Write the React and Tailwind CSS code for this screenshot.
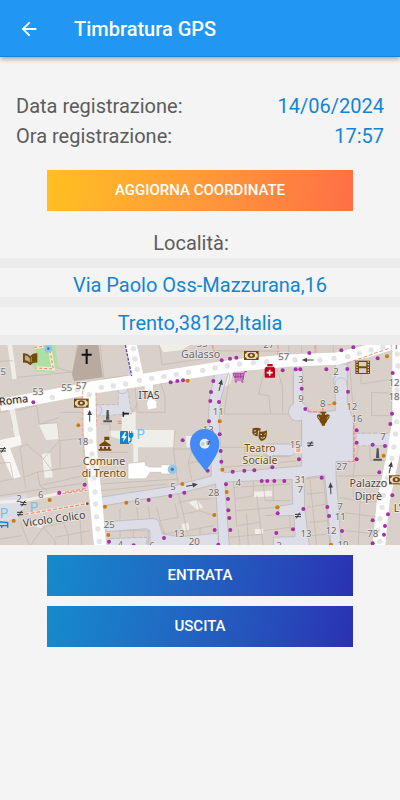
import React from 'react';

// [x, y] of the house number entrances on the map
const purpleDots = [
    [100, 175], [178, 446], [254, 422], [446, 468], [511, 456], [553, 446], [512, 115], [532, 111], [549, 109],
    [665, 49], [690, 44], [709, 41], [640, 111], [633, 144], [631, 171], [657, 174], [627, 232], [659, 271],
    [548, 289], [662, 321], [664, 353], [623, 380], [698, 383], [733, 380], [763, 379], [817, 370], [678, 421],
    [684, 465], [685, 499], [688, 522], [691, 558], [644, 558], [492, 582], [655, 602], [401, 604], [327, 593],
    [785, 411], [802, 411], [823, 411], [853, 411], [848, 79], [887, 76], [901, 76], [905, 134], [916, 195],
    [979, 76], [1042, 75], [1044, 143], [928, 27], [1024, 19], [1060, 10], [1133, 43], [1178, 87], [1176, 209],
    [1171, 240], [1070, 259], [1070, 296], [1118, 302], [1155, 306], [1070, 346], [1138, 385], [897, 346],
    [965, 401], [982, 489], [987, 516], [1026, 561], [910, 495], [833, 508], [879, 556], [829, 567],
    [1177, 454], [1164, 511], [1118, 529], [1155, 546], [1152, 572], [1118, 598],
];

const orangeDots = [
    [235, 244], [563, 110], [659, 232], [667, 377], [547, 420], [379, 476], [315, 488], [149, 468], [41, 530],
    [325, 573], [680, 444], [643, 513], [832, 490], [993, 602], [1003, 178], [1161, 37], [1151, 335],
];

const roadDots = [
    [5, 179], [56, 172], [157, 160], [232, 137], [304, 130], [340, 125], [377, 120], [418, 109], [455, 103],
    [492, 97], [529, 91], [566, 85], [608, 79], [645, 72], [682, 65], [719, 60], [760, 56], [800, 53], [885, 48],
    [960, 48], [1002, 43], [1043, 38], [1078, 28], [1113, 18], [1148, 9], [400, 14], [405, 45], [411, 76], [268, 152],
    [271, 256], [272, 292], [276, 330], [278, 366], [282, 402], [285, 444], [287, 480], [290, 518], [294, 555],
    [298, 592], [1192, 30], [1194, 66], [1191, 137], [1190, 233], [1187, 270], [1182, 309], [1176, 343],
    [1163, 402], [1150, 454], [1146, 490], [1140, 524], [1134, 560], [1139, 592],
];

const houseNumbers = [
    [10, 94, '5'], [114, 154, '53'], [200, 142, '55'], [244, 135, '57'], [248, 302, '18'], [57, 473, '2'],
    [122, 461, '6'], [606, 10, '55'], [806, 13, '27'], [851, 47, '57'], [903, 116, '3'], [903, 173, '9'],
    [1008, 94, '2'], [1008, 148, '8'], [968, 189, '8'], [1055, 199, '12'], [1071, 235, '16'], [1182, 125, '12'],
    [1182, 168, '18'], [1149, 289, '7'], [655, 213, '11'], [625, 266, '13'], [886, 311, '15'], [1025, 377, '27'],
    [519, 439, '5'], [411, 484, '6'], [641, 457, '28'], [715, 425, '4'], [901, 416, '31'], [901, 448, '7'],
    [328, 551, '25'], [537, 580, '13'], [583, 603, '20'], [456, 614, '6'], [361, 612, '4'], [918, 578, '13'],
    [993, 570, '12'], [1020, 497, '7'], [1021, 528, '11'], [1029, 613, '19'], [1118, 580, '78'], [837, 614, '3'],
    [1188, 14, '1'],
];

const placeNames = [
    [602, 41, 'Galasso', '#666666'],
    [447, 165, 'ITAS', '#444444'],
    [1105, 428, 'Palazzo', '#444444'],
    [1105, 468, 'Diprè', '#444444'],
    [312, 364, 'Comune', '#734a08'],
    [312, 400, 'di Trento', '#734a08'],
    [780, 323, 'Teatro', '#734a08'],
    [780, 359, 'Sociale', '#734a08'],
    [1192, 504, "L'", '#734a08'],
];

// outlines of the single buildings
const buildingLines = [
    'M0 52L38 50M50 100L230 83M300 0L312 108M170 70L225 88M217 96L232 0M312 104L382 95',
    'M395 98L540 76M478 0L486 62M486 62L640 40V3M640 20L840 22M866 0V38M905 0V26M948 0V24M1000 0V28M1090 28L1080 0',
    'M0 205L28 201L38 250M50 200L110 184M110 184L118 240M118 240L172 236M172 236L178 290M178 290L250 282M178 290L130 345L155 378L180 374V292',
    'M60 310L80 300L130 345M60 310L72 400L112 384L155 378M72 400L78 434M0 358L30 355L40 405L0 412M112 384L120 425L250 395M155 378L245 365',
    'M0 455L245 418M120 425L142 440M180 205H246M118 240L178 220',
    'M60 535L90 606M0 585L65 575M90 606L130 550L190 535L250 520M130 550L165 590V606M190 535L205 575M165 580L270 560M205 575V606M240 525L245 606',
    'M405 127L412 205H495V155L482 118M412 180L392 210M482 118L540 112M540 90L625 78',
    'M520 315H630M575 320L565 355L575 406M565 358L640 340M520 315L535 425M525 260L520 315',
    'M300 240H330V276M300 325H385M300 420L535 405M300 440L500 420',
    'M672 210H900M690 90L672 210M795 75L775 150L806 155L812 208M830 72L848 130V205M880 95V180',
    'M665 310H905M670 370L900 350M735 300V335H800M800 300V338H870M905 230V350',
    'M1050 70L1058 180M1083 85V120L1180 105V60M1115 145L1175 148V215H1115ZM1060 268H1175M1075 305L1068 350M1110 310V350H1165M1010 352H1065L1060 395H1150',
    'M1010 396H1060V425L1150 415M1020 460L1090 475L1140 470M1025 505L1140 520M1060 425V460M1080 475L1075 606M1035 560L1130 570',
    'M920 405L970 398L990 606M930 408L950 606M920 450L975 445M922 490L980 480M930 535L985 530M935 575L990 570',
    'M470 490L480 530L535 520L525 480M535 450L550 510L600 500L590 465L535 475M600 500L640 515M550 510L560 560L640 545M480 530L495 570L560 560M590 465L635 465M410 490L415 525M360 495V525M445 485L450 525M560 560L568 575M600 550V570',
    'M700 415L705 465L760 455V410M705 465L710 545L780 535L770 455M710 500L830 490M780 535L790 606M715 555L720 606M790 420L795 470H870M820 420V470M740 510L745 606M790 560L870 550M700 430L870 420M690 580L790 570M795 515L870 510V560',
    'M340 560H445V606M360 560V585M400 560V585M490 560V590M330 585L440 580',
];

const Bill = ({ x, y }) => (
    <g transform={`translate(${x} ${y})`}>
        <rect x="-22" y="-13" width="44" height="27" fill="#734a08" />
        <path d="M-13 -10H13Q14 -5 19 -4V5Q14 6 13 11H-13Q-14 6 -19 5V-4Q-14 -5 -13 -10Z" fill="#ead9c6" />
        <ellipse rx="11" ry="8" fill="#734a08" />
        <circle r="4" fill="#ead9c6" />
    </g>
);

const Arrow = ({ x, y, turn }) => (
    <g transform={`translate(${x} ${y}) rotate(${turn})`} fill="#444444">
        <rect x="-17" y="-1.5" width="24" height="3" />
        <path d="M19 0L3 -7V7Z" />
    </g>
);

const Monument = ({ x, y }) => (
    <path transform={`translate(${x} ${y})`} d="M-3 -20H3L5 9H-5ZM-13 11H13V17H-13Z" fill="#555555" />
);

const Gate = ({ x, y }) => (
    <path transform={`translate(${x} ${y})`} d="M-9 -3H9M-9 4H9M5 -8L-5 9" stroke="#333333" strokeWidth="3" fill="none" />
);

const CityMap = () => (
    <svg
        viewBox="0 3 1200 600"
        preserveAspectRatio="xMidYMid slice"
        className="block w-full h-[200px] font-['Noto_Sans','Open_Sans',sans-serif]"
        role="img"
        aria-label="Mappa"
    >
        <rect width="1200" height="610" fill="#d9d0c9" />

        {/* Courtyards and open ground */}
        <g fill="#f0eee8">
            <path d="M22 0H36L50 104L37 106Z" />
            <path d="M22 188L42 185L62 290L48 290Z" />
            <path d="M0 288L60 275L65 302L30 312L62 398L38 405L0 320Z" fill="#f8f6f2" />
            <path d="M117 242L172 236L178 285L138 288Z" />
            <path d="M126 330L150 326L158 400L134 403Z" />
            <path d="M365 205H407V258H522V310H414V355H400V300L328 275V260H365Z" />
            <path d="M557 276H576V310H560Z" />
            <path d="M478 3H570L545 18L490 25Z" />
            <path d="M760 443L815 440L817 457L762 460Z" />
            <path d="M566 475L590 467L610 490L592 497Z" />
            <path d="M545 540L566 537L568 560L548 562Z" />
            <path d="M100 530L140 520L125 552L105 548Z" />
            <path d="M682 84L700 82L690 120L672 130Z" />
            <path d="M765 555H790V570H765Z" />
        </g>
        <path d="M434 123L458 118L460 165L469 173V192L444 196L441 178L446 165V140H434Z" fill="#ffffff" />
        <path d="M384 358L436 353V364L450 369H483V362H515V390H483V385H450L438 404L384 405Z" fill="#ffffff" stroke="#c9bfb5" strokeWidth="2" />

        {buildingLines.map((d) => (
            <path key={d} d={d} fill="none" stroke="#c2b5aa" strokeWidth="2" />
        ))}

        {/* Church and garden */}
        <path d="M235 0H295L308 100L222 112L216 90Z" fill="#b9aaa0" />
        <path d="M98 0H165L174 70L160 87L105 80L98 62L110 30Z" fill="#aedfa3" />
        <path d="M103 10L130 7M150 20L160 75L108 72" fill="none" stroke="#f5e9cf" strokeWidth="10" />
        <path d="M103 10L130 7M150 20L160 75L108 72" fill="none" stroke="#e57c60" strokeWidth="3" strokeDasharray="8 7" />
        <circle cx="145" cy="14" r="12" fill="#8fc7e8" />
        <circle cx="145" cy="14" r="4" fill="#3478b8" />

        {/* Pedestrian streets and squares */}
        <g fill="#dddde8" stroke="#b4b2b8" strokeWidth="2">
            <path d="M355 130H382L395 210L355 212L300 216V182H355Z" strokeDasharray="12 5" />
            <path d="M352 132A16 18 0 0 0 384 130" />
            <path d="M288 181A17 18 0 0 1 288 217Z" />
            <path d="M0 462L80 452L75 485L52 525L0 532Z" stroke="none" />
            <path d="M1068 268H1178L1172 305H1068Z" strokeDasharray="12 5" />
            <path d="M310 533L460 524Q476 525 478 538L487 570L540 578L655 568V606H450V560L440 554L320 563Z" />
            <path d="M330 584L440 580V606H325Z" strokeDasharray="12 5" />
            <path d="M645 88L686 84L662 165L657 230L665 365L672 386L905 366V228A24 24 0 0 1 880 180V80H908V178A24 24 0 0 1 925 205L1006 200V125A17 17 0 0 1 1006 100V60H1042V180L1060 225V353L1008 352V397L1024 606H993L974 393L925 400L912 405L914 490L928 606H820V580L885 578L882 514L835 516L838 486L878 480L876 406L675 414L678 470L688 606H657L647 420L540 448L300 487V460L520 426L634 396L632 300L626 215L628 165Z" />
            <path d="M1006 125A18 18 0 1 1 1040 125" fill="none" />
            <path d="M800 300H870A17 17 0 0 1 870 335H800" />
        </g>
        <rect x="884" y="308" width="22" height="20" fill="#f2e6df" />

        {/* Carriage ways */}
        <g fill="none" stroke="#ffffff" strokeLinejoin="round">
            <path d="M0 183L180 150L280 130L440 106L700 65L860 50L1010 44L1100 22L1170 0" strokeWidth="37" />
            <path d="M392 0L415 105" strokeWidth="35" />
            <path d="M268 135L271 300L285 440L301 610" strokeWidth="37" />
            <path d="M1196 0L1196 230L1180 330L1150 470L1136 610" strokeWidth="38" />
            <path d="M0 475L70 470L170 450L262 438" strokeWidth="9" stroke="#f2efe9" />
        </g>
        <path d="M248 140L247 250L258 430" fill="none" stroke="#f3a99b" strokeWidth="3" strokeDasharray="11 5" />
        <path d="M288 145L290 245" fill="none" stroke="#f3a99b" strokeWidth="3" strokeDasharray="11 5" />
        <path d="M376 3L395 96" fill="none" stroke="#5547d8" strokeWidth="4" strokeDasharray="9 4" />
        <g fill="#e4e4e7">
            {roadDots.map(([x, y]) => (
                <circle key={`${x}-${y}`} cx={x} cy={y} r="8" />
            ))}
        </g>

        {/* Footpaths */}
        <g fill="none" stroke="#f4ece6" strokeWidth="8">
            <path d="M75 511L262 479" />
            <path d="M170 450L262 438" />
        </g>
        <g fill="none" stroke="#f08f80" strokeWidth="4" strokeDasharray="12 5">
            <path d="M75 511L262 479" />
            <path d="M170 451L262 439M195 445L262 433" />
            <path d="M922 201L968 206V182H1000" />
            <path d="M1062 210V352H1045" />
            <path d="M1042 57L1170 12" strokeWidth="3" />
            <path d="M834 3V35M945 3V28M636 3L650 45" strokeWidth="3" />
            <path d="M353 232H366M353 238H366M889 315H902M889 321H902" />
        </g>

        <g fill="#a531a8">
            {purpleDots.map(([x, y]) => (
                <circle key={`${x}-${y}`} cx={x} cy={y} r="6" />
            ))}
        </g>
        <g fill="#cc7b0c">
            {orangeDots.map(([x, y]) => (
                <circle key={`${x}-${y}`} cx={x} cy={y} r="6" />
            ))}
        </g>
        <circle cx="262" cy="479" r="4" fill="#555555" />

        <g fontSize="29" textAnchor="middle" fill="#6b6b6b" stroke="#ece7e3" strokeWidth="4" paintOrder="stroke">
            {houseNumbers.map(([x, y, label]) => (
                <text key={`${x}-${y}`} x={x} y={y}>{label}</text>
            ))}
        </g>
        <g fontSize="32" textAnchor="middle" stroke="#eee9e5" strokeWidth="5" paintOrder="stroke">
            {placeNames.map(([x, y, label, color]) => (
                <text key={label} x={x} y={y} fill={color}>{label}</text>
            ))}
            <text transform="translate(42 179) rotate(-7)" fill="#222222">Roma</text>
            <text transform="translate(164 536) rotate(-8)" fill="#333333">Vicolo Colico</text>
        </g>
        <g fontSize="44" textAnchor="middle" fill="#7cc0e8">
            <text x="422" y="285">P</text>
            <text x="102" y="503">P</text>
            <text x="12" y="521">P</text>
        </g>

        <Bill x={244} y={177} />
        <Bill x={754} y={34} />
        <Bill x={1189} y={407} />
        <Arrow x={269} y={216} turn={-90} />
        <Arrow x={661} y={124} turn={-76} />
        <Arrow x={924} y={48} turn={180} />
        <Arrow x={575} y={424} turn={-10} />
        <Arrow x={992} y={434} turn={-92} />
        <Arrow x={1171} y={371} turn={-78} />
        <Monument x={323} y={218} />
        <Monument x={1133} y={333} />
        <Gate x={9} y={317} />
        <Gate x={931} y={300} />
        <Gate x={70} y={478} />
        <Gate x={60} y={508} />
        <Gate x={894} y={514} />
        <path d="M370 203V218M370 209H387" stroke="#222222" strokeWidth="5" fill="none" />

        {/* Church cross */}
        <path d="M257 15H263V29H275V35H263V60H257V35H245V29H257Z" fill="#111111" />
        {/* Library */}
        <path d="M69 28Q82 26 91 37Q98 26 112 28V56Q98 54 91 64Q82 54 69 56Z" fill="#734a08" />
        <path d="M76 35Q85 36 89 44V54Q83 48 76 48ZM94 38V55" fill="#c6ad8f" stroke="#c6ad8f" strokeWidth="2" />
        {/* Town hall */}
        <path d="M313 278H328V288H316V292L332 302V306H298V302L313 292ZM300 308H306V314H312V308H318V314H324V308H330V315H334V320H296V315H300Z" fill="#734a08" />
        {/* Charging station */}
        <g fill="#0a86cf">
            <path d="M360 264Q360 261 363 261H381Q384 261 384 264V296H387V300H360Z" />
            <path d="M387 267V262H390V267H394V262H397V267H400V276Q399 281 395 282V290Q394 298 386 296V291Q391 293 391 288V282Q386 280 386 276V267Z" />
            <path d="M374 265L364 282H371L369 294L381 277H374L378 265Z" fill="#ffffff" />
        </g>
        {/* Bus shelter at the left edge */}
        <path d="M0 534L23 536V551M0 545H22M5 545V552" stroke="#0a86cf" strokeWidth="4" fill="none" />
        {/* Supermarket cart */}
        <g fill="none" stroke="#ac39ac" strokeWidth="3">
            <path d="M741 83H733L729 108H704" />
            <path d="M731 88H699L704 102H729M703 93H731M703 98H730M707 88V102M714 88V102M722 88V102" />
            <circle cx="708" cy="113" r="2" />
            <circle cx="727" cy="113" r="2" />
        </g>
        {/* Pharmacy */}
        <path d="M802 60H818V68H822L825 74V98Q825 101 822 101H797Q794 101 794 98V74L798 68H802Z" fill="#c4001d" />
        <path d="M809 77V95M800 86H818" stroke="#ffffff" strokeWidth="5" />
        <path d="M801 68H819" stroke="#ffffff" strokeWidth="2" />
        {/* Cinema */}
        <path d="M1066 50H1110V90H1066Z" fill="#734a08" />
        <path d="M1077 54H1099V67H1077ZM1077 73H1099V87H1077Z" fill="#d9d0c9" />
        <path d="M1071 52V90M1105 52V90" stroke="#d9d0c9" strokeWidth="4" strokeDasharray="4 4" />
        {/* Museum vase */}
        <path d="M961 203H979V208H975V213Q984 208 989 214Q990 223 982 229Q981 236 975 240V245H965V240Q959 236 958 229Q950 223 951 214Q956 208 965 213V208H961Z" fill="#734a08" />
        <path d="M955 217Q955 222 960 224M985 217Q985 222 980 224" stroke="#dddde8" strokeWidth="2" fill="none" />
        {/* Theatre masks */}
        <path d="M758 253Q770 250 782 253L781 260H774L773 277Q757 275 757 265ZM777 262Q789 266 801 259L800 276Q798 288 785 291Q774 285 776 273Z" fill="#734a08" />
        <path d="M762 261L768 260M781 271L786 272M793 271L797 269M782 281Q789 285 795 279M763 270L769 267" stroke="#d9d0c9" strokeWidth="3" fill="none" />
        {/* Fountain */}
        <circle cx="517" cy="376" r="14" fill="#93c8e7" />
        <circle cx="517" cy="376" r="5" fill="#397caf" />

        {/* Position marker */}
        <path d="M614 255C638 255 658 274 658 299C658 329 636 352 617 382C596 352 570 329 570 299C570 274 590 255 614 255Z" fill="#4389fa" />
        <circle cx="614" cy="299" r="15" fill="#e9eeee" />
        <circle cx="608" cy="300" r="6" fill="#c3d7b6" />
        <path d="M619 294H631M620 300H629M628 291L624 303" stroke="#222222" strokeWidth="2" />
    </svg>
);

const ActionButton = ({ children, className }) => (
    <button type="button" className={`w-full h-[41px] text-[15px] font-medium uppercase text-white ${className}`}>
        {children}
    </button>
);

const App = () => {
    return (
        <div className="min-h-screen bg-[#f4f4f4] font-[Roboto,sans-serif] text-[#5c5c5c]">
            <header className="flex items-center h-[57px] pt-px px-4 gap-8 bg-[#2196f3] text-white border-b border-[#1b83d6] shadow-[0_2px_5px_rgba(0,0,0,0.35)]">
                <button type="button" aria-label="Indietro" className="w-[26px] flex justify-center">
                    <svg viewBox="0 0 24 24" className="w-[22px] h-[22px]" fill="currentColor">
                        <path d="M20 11H7.83l5.59-5.59L12 4l-8 8 8 8 1.41-1.41L7.83 13H20v-2z" />
                    </svg>
                </button>
                <h1 className="text-[20px] font-medium">Timbratura GPS</h1>
            </header>

            <main>
                <dl className="px-4 pt-[34px] text-[20px] leading-[30px]">
                    <div className="flex justify-between">
                        <dt>Data registrazione:</dt>
                        <dd className="text-[#1285d6]">14/06/2024</dd>
                    </div>
                    <div className="flex justify-between">
                        <dt>Ora registrazione:</dt>
                        <dd className="text-[#1285d6]">17:57</dd>
                    </div>
                </dl>

                <div className="px-[47px] pt-[19px]">
                    <ActionButton className="bg-linear-100 from-[#ffc01e] to-[#ff6e45]">Aggiorna coordinate</ActionButton>
                </div>

                <section className="mt-[17px] text-center text-[20px]">
                    <h2 className="pr-[18px] leading-[30px]">Località:</h2>
                    <div className="border-y-[10px] border-[#ececec] text-[#1285d6]">
                        <p className="pt-[5px] leading-[24px]">Via Paolo Oss-Mazzurana,16</p>
                    </div>
                    <div className="border-b-[10px] border-[#ececec] text-[#1285d6]">
                        <p className="pt-[5px] pb-px leading-[22px]">Trento,38122,Italia</p>
                    </div>
                </section>

                <CityMap />

                <div className="px-[47px] py-[10px] flex flex-col gap-[10px]">
                    <ActionButton className="bg-linear-100 from-[#148bcd] to-[#2a31b3]">Entrata</ActionButton>
                    <ActionButton className="bg-linear-100 from-[#148bcd] to-[#2a31b3]">Uscita</ActionButton>
                </div>
            </main>
        </div>
    );
};

export default App;
